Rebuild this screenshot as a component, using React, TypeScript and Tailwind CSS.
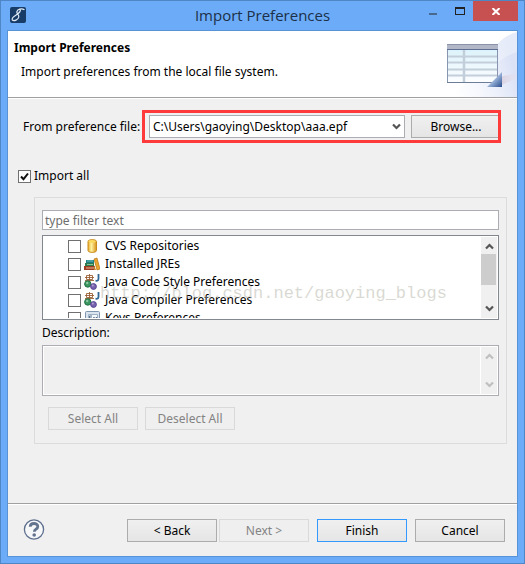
/**
 * Import Preferences dialog
 *
 * Wizard page for loading preferences from a local file:
 * - Preference file picker
 * - Preference tree with filter and description
 * - Wizard navigation buttons
 */

import { useState } from 'react'
import type { ReactNode } from 'react'
import clsx from 'clsx'

interface PreferenceItem {
  id: string
  label: string
  icon: ReactNode
}

const preferences: PreferenceItem[] = [
  { id: 'cvs', label: 'CVS Repositories', icon: <RepositoryIcon /> },
  { id: 'jre', label: 'Installed JREs', icon: <LibraryIcon /> },
  { id: 'style', label: 'Java Code Style Preferences', icon: <JavaIcon /> },
  { id: 'compiler', label: 'Java Compiler Preferences', icon: <JavaIcon /> },
  { id: 'keys', label: 'Keys Preferences', icon: <KeysIcon /> },
]

export default function App() {
  const [importAll, setImportAll] = useState(true)
  const [filter, setFilter] = useState('')

  return (
    <div className="flex min-h-screen flex-col border border-[#4e86c6] bg-[#6babf7] px-1.5 pb-1.5 font-['Noto_Sans','Open_Sans',sans-serif] text-xs text-black">
      <TitleBar />

      <div className="flex flex-1 flex-col border border-[#5793d6] bg-[#f0f0f0]">
        <Header />

        <main className="flex flex-1 flex-col">
          {/* File picker */}
          <div className="flex items-center pt-3 pr-4 pl-[15px]">
            <label htmlFor="file" className="w-[119px] shrink-0 whitespace-nowrap">
              From preference file:
            </label>
            <div className="relative flex flex-1 gap-1.5 bg-[#f0f0f0] py-[5px] pl-[7px]">
              <div className="relative flex-1">
                <select
                  id="file"
                  className="block h-[23px] w-full appearance-none border border-[#abadb3] bg-white px-[3px] leading-5"
                >
                  <option>C:\Users\gaoying\Desktop\aaa.epf</option>
                </select>
                <Chevron className="pointer-events-none absolute top-2 right-1 rotate-180 text-[#555]" />
              </div>
              <DialogButton>Browse...</DialogButton>
              <div className="pointer-events-none absolute inset-0 border-3 border-[#ff3a3a]" />
            </div>
          </div>

          <label className="mt-[25px] ml-2.5 flex items-center gap-[3px] self-start">
            <CheckBox checked={importAll} onChange={setImportAll} />
            Import all
          </label>

          {/* Preference selection */}
          <fieldset className="mt-[13px] mr-2.5 ml-[26px] flex flex-col border border-[#dcdcdc] px-[7px] pt-3 pb-[13px]">
            <input
              type="text"
              aria-label="Filter"
              placeholder="type filter text"
              value={filter}
              onChange={(e) => setFilter(e.target.value)}
              className="h-5 border border-[#abadb3] bg-white px-0.5 placeholder:text-[#6d6d6d]"
            />

            <div className="relative mt-[5px] flex h-[85px] border border-[#828790] bg-white p-px">
              <ul className="flex-1 overflow-hidden pl-6">
                {preferences.map((item) => (
                  <li key={item.id}>
                    <label className="flex h-[18px] items-center">
                      <CheckBox />
                      <span className="mr-[5px] ml-[3px]">{item.icon}</span>
                      {item.label}
                    </label>
                  </li>
                ))}
              </ul>
              <ScrollBar />
              <span className="pointer-events-none absolute top-[46px] left-[57px] font-['Liberation_Mono',monospace] text-[17px] leading-6 whitespace-nowrap text-[#b4b4a8]/50">
                http://blog.csdn.net/gaoying_blogs
              </span>
            </div>

            <label htmlFor="description" className="mt-1 leading-[18px]">
              Description:
            </label>
            <div className="mt-[3px] flex h-[51px] border border-[#abadb3] bg-white p-px">
              <textarea
                id="description"
                disabled
                className="mr-px flex-1 resize-none bg-[#f0f0f0]"
              />
              <ScrollBar disabled />
            </div>

            <div className="mt-[11px] flex gap-[7px] pl-1.5">
              <DialogButton disabled>Select All</DialogButton>
              <DialogButton disabled>Deselect All</DialogButton>
            </div>
          </fieldset>
        </main>

        <Footer />
      </div>
    </div>
  )
}

function TitleBar() {
  return (
    <div className="relative flex h-[29px] shrink-0 items-start pl-[3px]">
      <AppIcon />
      <h1 className="absolute inset-x-0 top-0.5 text-center font-['Open_Sans',sans-serif] text-[15px] leading-6 text-[#1c3048]">
        Import Preferences
      </h1>
      <div className="relative ml-auto flex">
        <button type="button" aria-label="Minimize" className="flex h-5 w-[27px] justify-center">
          <span className="mt-3 h-0.5 w-2 bg-[#48688e]" />
        </button>
        <button type="button" aria-label="Maximize" className="flex h-5 w-[27px] justify-center">
          <span className="mt-1.5 h-2 w-2.5 border border-t-2 border-[#222]" />
        </button>
        <button
          type="button"
          aria-label="Close"
          className="flex h-5 w-[45px] items-center justify-center bg-[#c75050] text-white"
        >
          <svg width="8" height="7" viewBox="0 0 8 7" fill="none" stroke="currentColor" strokeWidth="2">
            <path d="M.5 0 7.5 7M7.5 0 .5 7" />
          </svg>
        </button>
      </div>
    </div>
  )
}

function Header() {
  return (
    <header className="flex h-[67px] shrink-0 justify-between border-b border-[#a0a0a0] bg-white pl-1.5 shadow-[0_1px_0_white]">
      <div className="pt-2">
        <h2 className="leading-[18px] font-bold">Import Preferences</h2>
        <p className="mt-1.5 pl-[7px] leading-[18px]">
          Import preferences from the local file system.
        </p>
      </div>
      <WizardBanner />
    </header>
  )
}

function Footer() {
  return (
    <footer className="flex items-start border-t border-[#a0a0a0] px-3 pt-[15px] pb-3.5 shadow-[inset_0_1px_0_white]">
      <button type="button" aria-label="Help" className="ml-[3px]">
        <HelpIcon />
      </button>
      <div className="ml-auto flex gap-2">
        <div className="flex gap-0.5">
          <DialogButton>&lt; Back</DialogButton>
          <DialogButton disabled>Next &gt;</DialogButton>
        </div>
        <DialogButton primary>Finish</DialogButton>
        <DialogButton>Cancel</DialogButton>
      </div>
    </footer>
  )
}

interface DialogButtonProps {
  children: ReactNode
  primary?: boolean
  disabled?: boolean
}

function DialogButton({ children, primary, disabled }: DialogButtonProps) {
  return (
    <button
      type="button"
      disabled={disabled}
      className={clsx(
        'h-[23px] w-[90px] shrink-0 border leading-5',
        disabled
          ? 'border-[#d9d9d9] bg-[#efefef] text-[#838383]'
          : 'bg-linear-to-b from-[#f0f0f0] to-[#e5e5e5]',
        !disabled && (primary ? 'border-[#3399ff]' : 'border-[#acacac]')
      )}
    >
      {children}
    </button>
  )
}

interface CheckBoxProps {
  checked?: boolean
  onChange?: (checked: boolean) => void
}

function CheckBox({ checked, onChange }: CheckBoxProps) {
  return (
    <span className="relative size-[13px] shrink-0">
      <input
        type="checkbox"
        defaultChecked={checked}
        onChange={(e) => onChange?.(e.target.checked)}
        className="peer block size-[13px] appearance-none border border-[#707070] bg-white"
      />
      <svg
        viewBox="0 0 13 13"
        className="pointer-events-none absolute inset-0 hidden size-[13px] peer-checked:block"
        fill="none"
        stroke="#111"
        strokeWidth="2"
      >
        <path d="m3 6.5 2.5 2.7L10 3.5" />
      </svg>
    </span>
  )
}

function ScrollBar({ disabled }: { disabled?: boolean }) {
  return (
    <div
      className={clsx(
        'flex w-4 flex-col items-center justify-between bg-[#f0f0f0] py-1.5',
        disabled ? 'text-[#bfbfbf]' : 'text-[#555]'
      )}
    >
      <Chevron />
      {!disabled && <div className="mt-1 mb-auto h-[31px] w-[15px] self-start bg-[#cdcdcd]" />}
      <Chevron className="rotate-180" />
    </div>
  )
}

function Chevron({ className }: { className?: string }) {
  return (
    <svg
      width="9"
      height="7"
      viewBox="0 0 9 7"
      fill="none"
      stroke="currentColor"
      strokeWidth="2.2"
      className={clsx('shrink-0', className)}
    >
      <path d="M1 5.5 4.5 2 8 5.5" />
    </svg>
  )
}

function AppIcon() {
  return (
    <svg width="16" height="16" viewBox="0 0 16 16" className="mt-1.5 shrink-0" fill="none">
      <rect width="16" height="16" rx="2" fill="#173c68" />
      <path
        d="M14.5 2.8C11.5 1 7.2 2 6.8 4.8c-.2 2.400 2.400 3 2 5.200C8.300 12.800 4 14.600 2.300 13c-1-1.800 1.400-3.600 4.200-5.300C9 6.200 11 4.500 10.300 2.200"
        stroke="#dfeaf5"
        strokeWidth="1.2"
      />
    </svg>
  )
}

function WizardBanner() {
  return (
    <svg width="75" height="66" viewBox="0 0 75 66" className="shrink-0">
      <defs>
        <linearGradient id="sweep" x1="0.1" y1="0.9" x2="1" y2="0.5">
          <stop offset="0" stopColor="#fff" />
          <stop offset="0.6" stopColor="#eef2fb" />
          <stop offset="1" stopColor="#e6ebf9" />
        </linearGradient>
        <linearGradient id="sweepLower" x1="0.1" y1="0.8" x2="1" y2="0.6">
          <stop offset="0" stopColor="#fff" stopOpacity="0" />
          <stop offset="1" stopColor="#dbe2f6" />
        </linearGradient>
        <linearGradient id="glint" x1="0" y1="0" x2="1" y2="0">
          <stop offset="0" stopColor="#c9afc0" stopOpacity="0.5" />
          <stop offset="1" stopColor="#e9dfea" stopOpacity="0.2" />
        </linearGradient>
        <linearGradient id="table" x1="0" y1="0" x2="0" y2="1">
          <stop offset="0" stopColor="#d8f1fa" />
          <stop offset="1" stopColor="#fdfeff" />
        </linearGradient>
        <linearGradient id="corner" x1="0" y1="0" x2="1" y2="1">
          <stop offset="0.4" stopColor="#b4cbea" />
          <stop offset="1" stopColor="#284c8c" />
        </linearGradient>
      </defs>
      <path d="M75 1C66 3 58 9 52 17 44 32 30 52 4 66H75Z" fill="url(#sweep)" />
      <path d="M75 21C66 24 59 28 54 34 42 50 30 60 14 66H75Z" fill="url(#sweepLower)" />
      <path d="M57 46 75 42V47L60 54Z" fill="url(#glint)" />
      <rect x="5.500" y="14.500" width="50" height="37" fill="url(#table)" stroke="#8795ae" />
      <path d="M5 13.500H56V18H5Z" fill="#b1b7c7" />
      <path d="M5 13.500H56" stroke="#8a93a8" />
      <path d="M5 18.500H56" stroke="#5d7093" />
      <path d="M6 25.500H55M6 31.500H55M6 38.500H55M6 44.500H55" stroke="#c3cedb" strokeWidth="2" />
      <path d="M22 19V51" stroke="#c3cedb" strokeWidth="2.500" />
      <path d="M5 51.500H56" stroke="#6c7c99" />
      <path d="M60 41V56H45Z" fill="url(#corner)" />
    </svg>
  )
}

function HelpIcon() {
  return (
    <svg width="22" height="22" viewBox="0 0 22 22" fill="none" className="block">
      <circle cx="11" cy="10.500" r="9.600" fill="#f6f7f9" stroke="#5e6f8e" strokeWidth="1.300" />
      <path d="M7.200 7.800c0-4.500 7.600-4.200 7.600-.4 0 2.800-3.500 2.600-3.500 5.400" stroke="#64748f" strokeWidth="2.800" />
      <circle cx="11.200" cy="16" r="1.800" fill="#64748f" />
    </svg>
  )
}

function RepositoryIcon() {
  return (
    <svg width="16" height="16" viewBox="0 0 16 16" className="block">
      <defs>
        <linearGradient id="gold">
          <stop offset="0" stopColor="#e9a92a" />
          <stop offset="0.4" stopColor="#fff3a0" />
          <stop offset="1" stopColor="#d8921a" />
        </linearGradient>
      </defs>
      <path d="M4 3.500C4 1 12.500 1 12.500 3.500v9c0 2.500-8.500 2.500-8.500 0Z" fill="url(#gold)" stroke="#c98a18" />
      <ellipse cx="8.200" cy="3.500" rx="3.600" ry="1.300" fill="#fbd95a" />
    </svg>
  )
}

function LibraryIcon() {
  return (
    <svg width="16" height="16" viewBox="0 0 16 16" className="block">
      <path d="M2 4h8v3H2Z" fill="#1c7f86" />
      <path d="M3 5h6" stroke="#6fc0bd" />
      <path d="M1 7h9v3H1Z" fill="#2d7a4c" />
      <path d="M3 8.500h6" stroke="#8cc29b" />
      <path d="M0 10h11v4H0Z" fill="#9c3c22" />
      <path d="M2 12h8" stroke="#e8b693" />
      <path d="m10 3 3-1 3 11-3 1Z" fill="#eba62f" stroke="#b97312" strokeWidth="0.700" />
      <path d="m10 9 2 5h-2Z" fill="#c7852b" />
    </svg>
  )
}

function JavaIcon() {
  return (
    <svg width="16" height="16" viewBox="0 0 16 16" className="block" fill="none">
      <path d="M2.500 1.500h6v4h-6ZM5.500 0v7M1 3.500h9M1 6.500h9" stroke="#9a6034" strokeWidth="0.900" />
      <path d="M14.500 0v4.500c0 2-1 2.500-3 2.200" stroke="#2f6796" strokeWidth="1.800" />
      <circle cx="3.800" cy="10" r="3.200" fill="#3b9560" stroke="#26734a" />
      <circle cx="3.200" cy="9" r="1.200" fill="#8bcaa0" />
      <circle cx="9.500" cy="12.500" r="2.900" fill="#7763ad" stroke="#594695" />
      <circle cx="8.800" cy="11.600" r="1" fill="#b4a5d6" />
    </svg>
  )
}

function KeysIcon() {
  return (
    <svg width="16" height="16" viewBox="0 0 16 16" className="block" fill="none">
      <rect x="1.500" y="1.500" width="14" height="14" rx="1" fill="#d9e4ee" stroke="#7e95ad" />
      <path d="M4.500 4.500h9v8h-9Z" fill="#f4f8fb" stroke="#9fb2c5" />
      <path d="M8 6H5.500v4H8M5.500 8H8M9.500 10V7.500h1.200M12 10V7.500h1.200" stroke="#55708e" />
    </svg>
  )
}
